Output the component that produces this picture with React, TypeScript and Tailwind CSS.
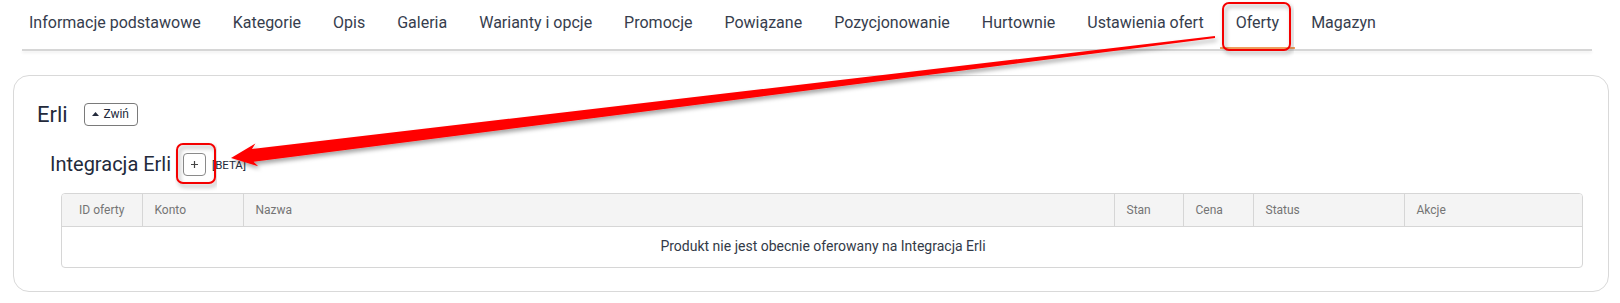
import React from 'react';

const tabs = [
    'Informacje podstawowe',
    'Kategorie',
    'Opis',
    'Galeria',
    'Warianty i opcje',
    'Promocje',
    'Powiązane',
    'Pozycjonowanie',
    'Hurtownie',
    'Ustawienia ofert',
    'Oferty',
    'Magazyn',
];

const columns = [
    { label: 'ID oferty', w: 'w-[80px]', center: true },
    { label: 'Konto', w: 'w-[101px]' },
    { label: 'Nazwa', w: 'w-[871px]' },
    { label: 'Stan', w: 'w-[69px]' },
    { label: 'Cena', w: 'w-[70px]' },
    { label: 'Status', w: 'w-[151px]' },
    { label: 'Akcje', w: 'w-[180px]' },
];

// red markup drawn on top of the screenshot (boxes + arrow)
const Annotations = () => {
    // arrow: tail (1215,37) -> tip (231,158), tapered shaft
    const tail = [1215, 37];
    const tip = [231, 158];
    const dx = tip[0] - tail[0];
    const dy = tip[1] - tail[1];
    const len = Math.hypot(dx, dy);
    const ux = dx / len, uy = dy / len;
    const nx = -uy, ny = ux;
    const headLen = 26, headHalf = 11.5;
    const bx = tip[0] - ux * headLen, by = tip[1] - uy * headLen;
    const w0 = 1, w1 = 6.5;
    const pts = [
        [tail[0] + nx * w0, tail[1] + ny * w0],
        [bx + ux * 4 + nx * w1, by + uy * 4 + ny * w1],
        [bx + nx * headHalf, by + ny * headHalf],
        [tip[0], tip[1]],
        [bx - nx * headHalf, by - ny * headHalf],
        [bx + ux * 4 - nx * w1, by + uy * 4 - ny * w1],
        [tail[0] - nx * w0, tail[1] - ny * w0],
    ]
        .map((p) => `${p[0].toFixed(1)},${p[1].toFixed(1)}`)
        .join(' ');

    return (
        <svg className="pointer-events-none absolute left-0 top-0" width="1620" height="303" viewBox="0 0 1620 303">
            <defs>
                <filter id="sh" x="-5%" y="-50%" width="110%" height="200%">
                    <feDropShadow dx="2" dy="3" stdDeviation="2" floodColor="#000" floodOpacity="0.35" />
                </filter>
            </defs>
            <rect x="1223" y="3" width="67" height="47" rx="6" fill="none" stroke="#f40000" strokeWidth="2" filter="url(#sh)" />
            <rect x="177" y="144" width="38" height="39" rx="6" fill="none" stroke="#f40000" strokeWidth="2" filter="url(#sh)" />
            <polygon points={pts} fill="#ff0000" filter="url(#sh)" />
        </svg>
    );
};

export default function App() {
    return (
        <div className="relative h-[303px] w-[1620px] overflow-hidden bg-white font-['Roboto',sans-serif]">
            <nav className="flex h-[49px] items-end px-[13px]">
                {tabs.map((t) => (
                    <span
                        key={t}
                        className={`flex h-[49px] items-center px-4 pb-[2px] text-[16px] text-[#363d4d] ${t === 'Oferty' ? 'border-b-2 border-[#f0a060]' : 'border-b-2 border-transparent'}`}
                    >
                        {t}
                    </span>
                ))}
            </nav>
            <div className="ml-[22px] mr-[28px] h-[2px] bg-[#d6d6d6] shadow-[0_2px_3px_rgba(0,0,0,0.07)]" />

            <div className="ml-[13px] mt-[24px] w-[1596px] rounded-[16px] border border-[#d9d9d9] pb-[23px] pl-[23px] pr-[25px] pt-[23px]">
                <div className="flex h-[30px] items-center">
                    <h2 className="text-[22px] text-[#232a3b]">Erli</h2>
                    <button className="ml-4 flex h-[23px] w-[54px] items-center justify-center gap-[4px] rounded-[4px] border border-[#7a7a7a] text-[12px] text-[#232a3b]">
                        <svg width="7" height="4" viewBox="0 0 7 4">
                            <polygon points="0,4 3.5,0 7,4" fill="#232a3b" />
                        </svg>
                        Zwiń
                    </button>
                </div>

                <div className="mt-[20px] flex h-[30px] items-center pl-[13px]">
                    <h3 className="text-[20px] text-[#232a3b]">Integracja Erli</h3>
                    <button className="ml-[12px] flex h-[23px] w-[23px] items-center justify-center rounded-[4px] border border-[#8a8a8a]">
                        <svg width="9" height="9" viewBox="0 0 9 9">
                            <path d="M4.5 1v7M1 4.5h7" stroke="#444" strokeWidth="1.2" />
                        </svg>
                    </button>
                    <span className="ml-[6px] mt-[3px] text-[11.5px] text-[#232a3b]">[BETA]</span>
                </div>

                <div className="ml-6 mt-[14px] overflow-hidden rounded-[4px] border border-[#d6d6d6]">
                    <table className="w-full table-fixed border-collapse">
                        <thead>
                            <tr className="h-[32px] bg-[#f4f4f4]">
                                {columns.map((c, i) => (
                                    <th
                                        key={c.label}
                                        className={`${c.w} border-b border-[#d6d6d6] px-3 text-[12px] font-normal text-[#747474] ${c.center ? 'text-center' : 'text-left'} ${i > 0 ? 'border-l' : ''}`}
                                    >
                                        {c.label}
                                    </th>
                                ))}
                            </tr>
                        </thead>
                        <tbody>
                            <tr className="h-[41px]">
                                <td colSpan={7} className="text-center text-[14px] text-[#333a48]">
                                    Produkt nie jest obecnie oferowany na Integracja Erli
                                </td>
                            </tr>
                        </tbody>
                    </table>
                </div>
            </div>

            <Annotations />
        </div>
    );
}
